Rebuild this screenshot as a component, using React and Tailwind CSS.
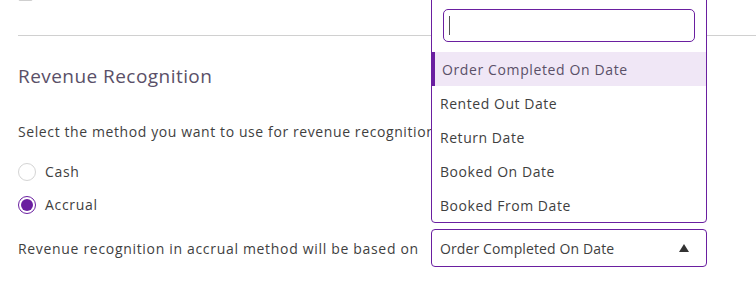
import React from "react";

const options = [
  "Order Completed On Date",
  "Rented Out Date",
  "Return Date",
  "Booked On Date",
  "Booked From Date",
];

const Radio = ({ checked, label }) => (
  <label className="flex items-center h-[33px]">
    <span
      className={`flex items-center justify-center w-[18px] h-[18px] rounded-full border ${
        checked ? "border-[#6a1fa0]" : "border-[#d4d4d4]"
      }`}
    >
      {checked && <span className="w-[12px] h-[12px] rounded-full bg-[#6a1fa0]"></span>}
    </span>
    <span className="ml-[9px] text-[14px] tracking-[0.7px] text-[#3f3f3f]">{label}</span>
  </label>
);

const App = () => {
  const selected = 0;

  return (
    <div
      className="relative w-[756px] h-[289px] overflow-hidden bg-white"
      style={{ fontFamily: '"Open Sans", "Liberation Sans", sans-serif' }}
    >
      <div className="pl-[18px]">
        {/* checkbox from the row above, mostly scrolled out */}
        <div className="w-[15px] h-[15px] -mt-[14px] rounded-[2px] border border-[#cfcfcf] bg-[#f4f4f4]"></div>

        <div className="mt-[34px] h-px bg-[#d0d0d0]"></div>

        <h2 className="mt-[28px] text-[19px] leading-[24px] tracking-[0.45px] text-[#5a5068]">Revenue Recognition</h2>

        <p className="mt-[34px] text-[14px] leading-[20px] tracking-[0.6px] text-[#3f3f3f] whitespace-nowrap">
          Select the method you want to use for revenue recognition
        </p>

        <div className="mt-[13px]">
          <Radio label="Cash" />
          <Radio label="Accrual" checked />
        </div>

        <div className="mt-[8px] flex items-center">
          <span className="w-[413px] text-[14px] tracking-[0.68px] text-[#3f3f3f] whitespace-nowrap">
            Revenue recognition in accrual method will be based on
          </span>
          <div className="flex items-center justify-between w-[276px] h-[38px] px-[8px] rounded-[4px] border border-[#6a1fa0] bg-white">
            <span className="text-[14px] tracking-[0.12px] text-[#3f3f3f]">{options[selected]}</span>
            <svg width="10" height="8" viewBox="0 0 10 8" className="mr-[9px]">
              <path d="M5 0 L10 8 L0 8 Z" fill="#333" />
            </svg>
          </div>
        </div>
      </div>

      {/* open dropdown menu */}
      <div className="absolute left-[431px] top-[-10px] w-[276px] h-[233px] rounded-b-[4px] border border-[#6a1fa0] bg-white">
        <div className="px-[11px] pt-[18px] pb-[10px]">
          <div className="flex items-center h-[33px] rounded-[5px] border border-[#6a1fa0] px-[5px]">
            <span className="w-px h-[19px] bg-[#555]"></span>
          </div>
        </div>
        <ul>
          {options.map((o, i) => (
            <li
              key={o}
              className={`flex items-center h-[34px] text-[14px] text-[#3f3f3f] ${
                i === selected
                  ? "bg-[#f0e7f6] border-l-[3px] border-[#6a1fa0] pl-[7px] tracking-[0.62px] text-[#5a5068]"
                  : "pl-[8px] tracking-[0.55px]"
              }`}
            >
              {o}
            </li>
          ))}
        </ul>
      </div>
    </div>
  );
};

export default App;
